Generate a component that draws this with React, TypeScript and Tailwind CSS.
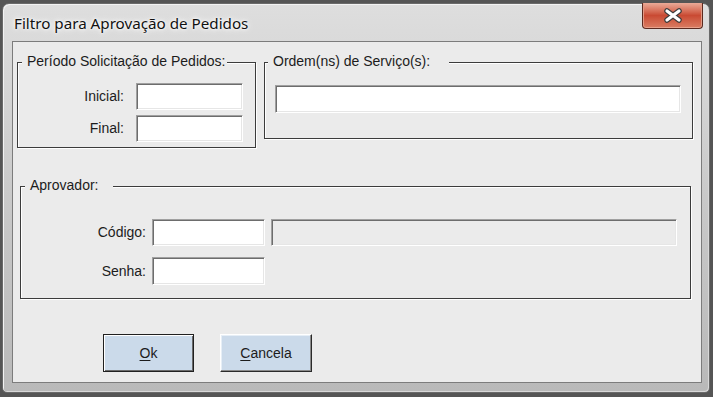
import type { ReactNode } from 'react'

const sans = { fontFamily: '"Liberation Sans", Arial, sans-serif' }

function GroupBox({
  legend,
  className,
  legendClass,
  children,
}: {
  legend: string
  className: string
  legendClass: string
  children: ReactNode
}) {
  return (
    <div
      className={`relative border border-[#3c3c3c] shadow-[inset_1px_1px_0_#ffffff,1px_1px_0_#ffffff] ${className}`}
    >
      <span className={`absolute -top-[10px] bg-[#ebebeb] leading-[17px] text-[14px] text-[#1c1c1c] ${legendClass}`}>
        {legend}
      </span>
      {children}
    </div>
  )
}

function TextBox({ className, disabled }: { className: string; disabled?: boolean }) {
  return (
    <div
      className={`border border-t-[#a0a0a0] border-l-[#a0a0a0] border-r-white border-b-white shadow-[inset_1px_1px_0_#6d6d6d,inset_-1px_-1px_0_#e6e6e6] ${
        disabled ? 'bg-[#ebebeb]' : 'bg-white'
      } ${className}`}
    />
  )
}

export default function App() {
  return (
    <div className="w-[713px] h-[397px] bg-[#555555] pt-[3px] pl-[2px] overflow-hidden" style={sans}>
      {/* window frame */}
      <div className="relative w-[708px] h-[390px] rounded-t-[7px] rounded-b-[5px] border border-[#6a6a6a] bg-gradient-to-b from-[#dedede] via-[#c9c9c9] to-[#b9b9b9] shadow-[inset_1px_1px_0_#f2f2f2,inset_-1px_-1px_0_#d8d8d8] flex flex-col">
        {/* title bar */}
        <div className="h-[37px] flex items-start pl-[11px] pt-[9px]">
          <span
            className="text-[15.2px] leading-[20px] text-[#111111] [text-shadow:0_0_8px_#ffffff,0_0_4px_#ffffff,0_0_2px_#ffffff]"
            style={{ fontFamily: '"Noto Sans", "Open Sans", sans-serif' }}
          >
            Filtro para Aprovação de Pedidos
          </span>
        </div>

        {/* close button */}
        <div className="absolute top-[-1px] right-[6px] w-[61px] h-[26px] rounded-b-[4px] border border-[#5b2a20] border-t-0 bg-gradient-to-b from-[#e9aa98] via-[#c94a33] to-[#d97c62] shadow-[inset_0_-1px_0_#e8a08a,inset_1px_0_0_#e39a85,inset_-1px_0_0_#e39a85] flex items-center justify-center">
          <svg width="20" height="15" viewBox="0 0 20 15">
            <path d="M4 3 L16 12 M16 3 L4 12" stroke="#3d3d3d" strokeWidth="5.5" strokeLinecap="round" />
            <path d="M4 3 L16 12 M16 3 L4 12" stroke="#ffffff" strokeWidth="3.2" strokeLinecap="round" />
          </svg>
        </div>

        {/* client area */}
        <div className="ml-[9px] w-[690px] h-[342px] border border-[#7c7c7c] bg-[#ebebeb] flex flex-col">
          <div className="flex items-start mt-[20px]">
            <GroupBox
              legend="Período Solicitação de Pedidos:"
              className="ml-[4px] w-[239px] h-[86px] pt-[20px]"
              legendClass="left-[4px] pl-[5px] pr-[2px]"
            >
              <div className="flex flex-col gap-[5px]">
                <div className="flex items-center gap-[12px]">
                  <span className="w-[106px] text-right text-[14px] text-[#1c1c1c]">Inicial:</span>
                  <TextBox className="w-[107px] h-[27px]" />
                </div>
                <div className="flex items-center gap-[12px]">
                  <span className="w-[106px] text-right text-[14px] text-[#1c1c1c]">Final:</span>
                  <TextBox className="w-[107px] h-[27px]" />
                </div>
              </div>
            </GroupBox>

            <GroupBox
              legend="Ordem(ns) de Serviço(s):"
              className="ml-[8px] w-[429px] h-[77px] pt-[22px] pl-[10px]"
              legendClass="left-[3px] pl-[5px] pr-[19px]"
            >
              <TextBox className="w-[406px] h-[28px]" />
            </GroupBox>
          </div>

          <GroupBox
            legend="Aprovador:"
            className="ml-[7px] mt-[38px] w-[671px] h-[113px] pt-[32px]"
            legendClass="left-[4px] pl-[5px] pr-[15px]"
          >
            <div className="flex flex-col gap-[11px]">
              <div className="flex items-center gap-[6px]">
                <span className="w-[125px] text-right text-[14px] text-[#1c1c1c]">Código:</span>
                <TextBox className="w-[113px] h-[27px]" />
                <TextBox className="w-[406px] h-[27px]" disabled />
              </div>
              <div className="flex items-center gap-[6px]">
                <span className="w-[125px] text-right text-[14px] text-[#1c1c1c]">Senha:</span>
                <TextBox className="w-[113px] h-[28px]" />
              </div>
            </div>
          </GroupBox>

          <div className="flex mt-[35px] ml-[90px] gap-[26px]">
            <button className="w-[91px] h-[38px] border border-[#202020] bg-[#cbdaea] shadow-[inset_1px_1px_0_#ffffff,inset_-1px_-1px_0_#6a6a6a] text-[14px] text-[#1c1c1c]">
              <span className="underline underline-offset-2">O</span>k
            </button>
            <button className="w-[92px] h-[38px] border border-t-white border-l-white border-r-[#2a2a2a] border-b-[#2a2a2a] bg-[#cbdaea] shadow-[inset_-1px_-1px_0_#8a8a8a,inset_1px_1px_0_#e6eef6] text-[14px] text-[#1c1c1c]">
              <span className="underline underline-offset-2">C</span>ancela
            </button>
          </div>
        </div>
      </div>
    </div>
  )
}
